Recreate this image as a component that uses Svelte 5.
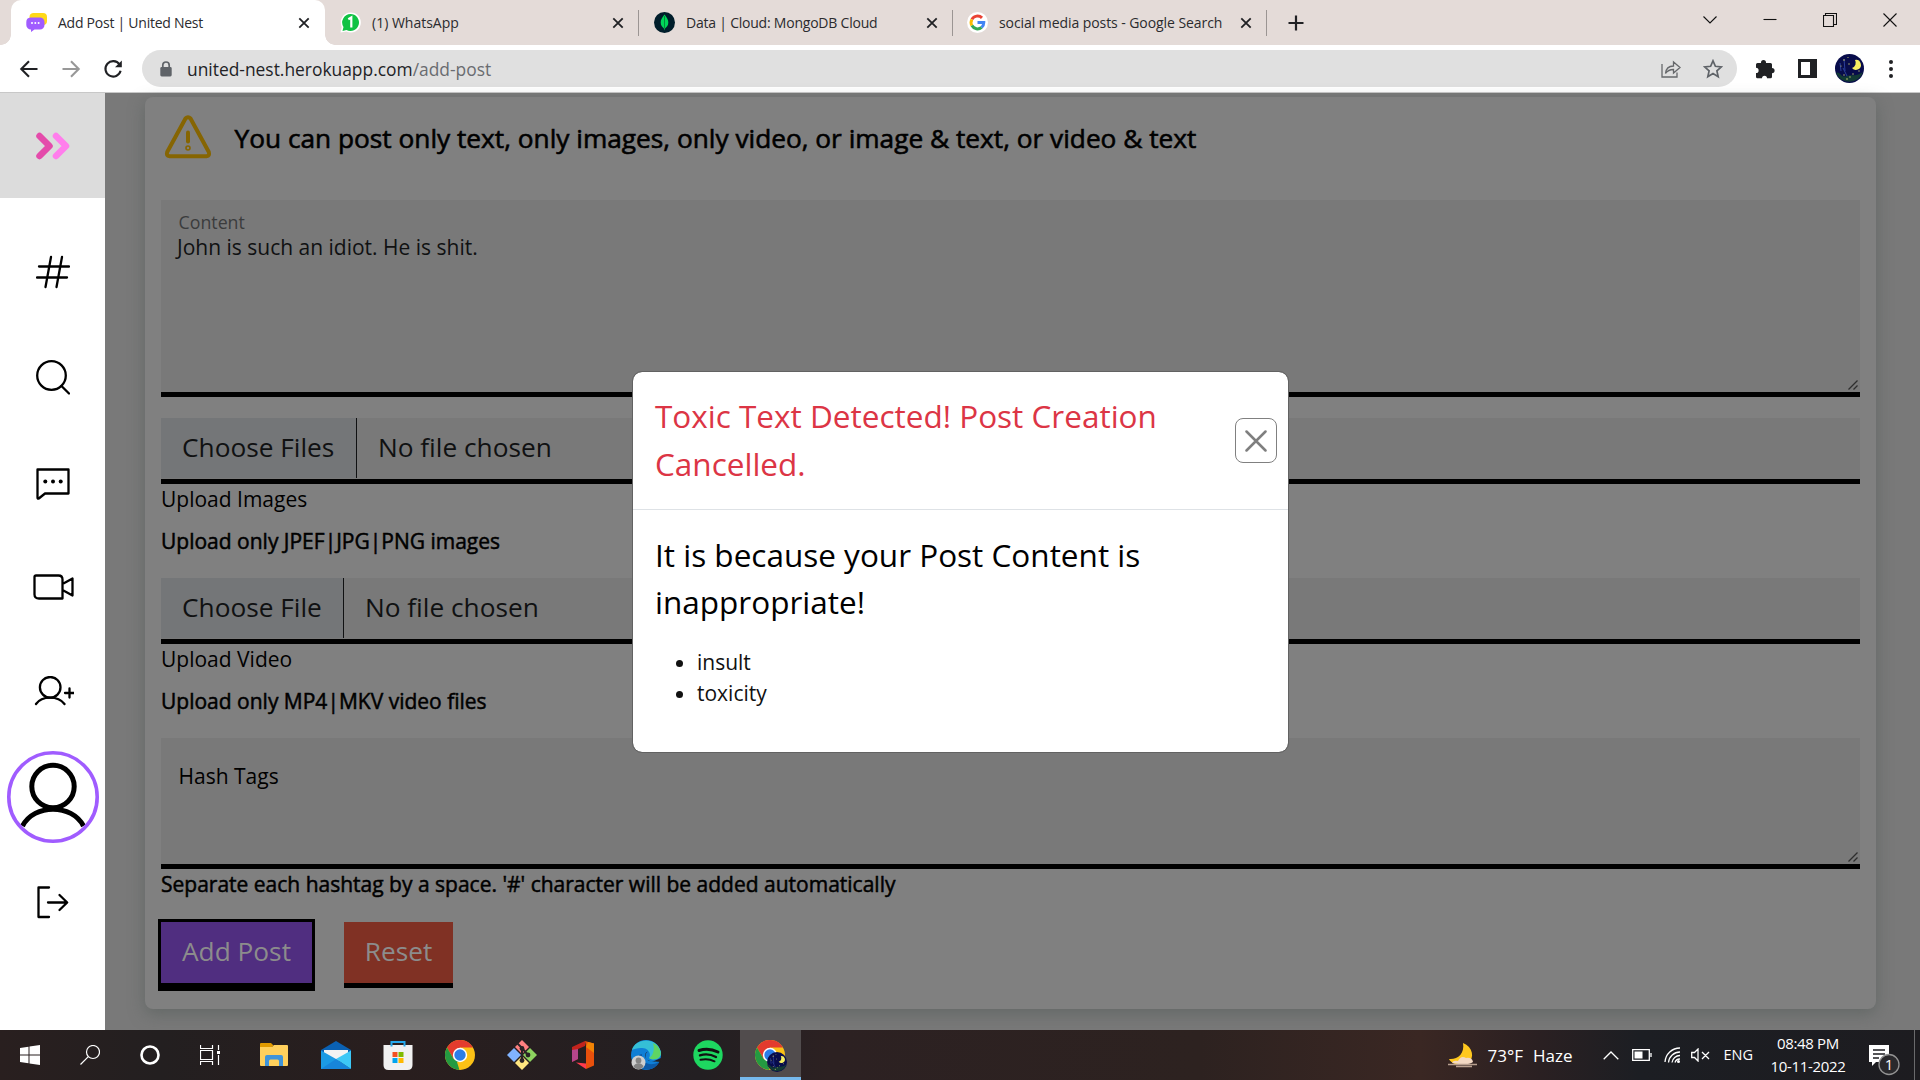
<script>
  const tabs = [
    { title: '(1) WhatsApp', kind: 'wa' },
    { title: 'Data | Cloud: MongoDB Cloud', kind: 'mongo' },
    { title: 'social media posts - Google Search', kind: 'google' }
  ];
</script>

{#snippet chrome()}
  <svg class="ic30" viewBox="0 0 30 30">
    <circle cx="15" cy="15" r="15" fill="#fbc116" />
    <path d="M15 15 8.500 18.800 2 7.500A15 15 0 0 1 28 7.500H15Z" fill="#e33b2e" />
    <path d="M2 7.500 8.500 18.800 15 22 14.500 30A15 15 0 0 1 2 7.500Z" fill="#249a41" />
    <path d="M15 22 21.500 18.500 14.500 30 12 22Z" fill="#fbc116" />
    <circle cx="15" cy="15" r="7.200" fill="#fff" />
    <circle cx="15" cy="15" r="5.700" fill="#2b7de9" />
  </svg>
{/snippet}

{#snippet night()}
  <svg class="night" viewBox="0 0 29 29">
    <circle cx="14.500" cy="14.500" r="14.500" fill="#080c4b" />
    <path d="M1 19C5 16 6 25 12 22C17 20 21 23 28 18A14.500 14.500 0 0 1 1 19Z" fill="#123a35" />
    <path d="M20 6A5 5 0 1 1 17 14A5.500 5.500 0 0 0 20 6Z" fill="#f7ef62" />
    <path d="M5 9l1 8M9 5l1 12M8 14l4 8" stroke="#2b3f9a" stroke-width="1" fill="none" />
    <g fill="#c6c86d"><circle cx="9" cy="6" r=".8" /><circle cx="13" cy="3.500" r=".6" /><circle cx="14" cy="10" r=".7" /><circle cx="6" cy="12" r=".6" /><circle cx="24" cy="17" r=".7" /><circle cx="18" cy="20" r=".7" /><circle cx="12" cy="25" r=".8" /><circle cx="15" cy="23" r=".7" /><circle cx="9" cy="21" r=".7" /></g>
  </svg>
{/snippet}

{#snippet closeX()}
  <svg class="tabx" viewBox="0 0 12 12"><path d="M1.300 1.300 10.700 10.700M10.700 1.300 1.300 10.700" stroke="#202124" stroke-width="1.800" /></svg>
{/snippet}

{#snippet grip()}
  <svg class="grip" viewBox="0 0 10 10"><path d="M.5 9.500 9.500.5M5.500 9.500 9.500 5.500" stroke="#2e2e2e" stroke-width="1.300" /></svg>
{/snippet}

<div class="screen">
  <div class="tabstrip">
    <div class="tab active">
      <svg class="fav" viewBox="0 0 21 19">
        <path d="M7 0h10a4 4 0 0 1 4 4v4a4 4 0 0 1-4 4H7a3.500 3.500 0 0 1-3.500-3.500V4A4 4 0 0 1 7 0Z" fill="#ffd91a" />
        <path d="M4.500 4.500h9.500A4.500 4.500 0 0 1 18.500 9v3a4.500 4.500 0 0 1-4.500 4.500H8.500L5 19v-2.500A4.500 4.500 0 0 1 .3 12V9A4.500 4.500 0 0 1 4.500 4.500Z" fill="#a05cff" />
        <g fill="#fff"><circle cx="6" cy="10" r="1" /><circle cx="9.300" cy="10" r="1" /><circle cx="12.600" cy="10" r="1" /></g>
      </svg>
      <span class="t tt t1">Add Post | United Nest</span>
      {@render closeX()}
    </div>
    {#each tabs as tab}
      <div class="tab {tab.kind}">
        {#if tab.kind === 'wa'}
          <svg class="fav" viewBox="0 0 21 21"><path d="M10.500.5a10 10 0 1 1-4 19L.5 20.500 1.800 15A10 10 0 0 1 10.500.5Z" fill="#fff" /><path d="M10.500 2a8.500 8.500 0 1 1-4 16L2.500 19l1-4A8.500 8.500 0 0 1 10.500 2Z" fill="#0fc243" /><path d="M8.300 7.300 11.300 5.500V15.500" stroke="#fff" stroke-width="2.200" fill="none" /></svg>
        {:else if tab.kind === 'mongo'}
          <svg class="fav" viewBox="0 0 21 21"><circle cx="10.500" cy="10.500" r="10.500" fill="#001e2b" /><path d="M10.500 2.500C8 5.500 6.700 8 6.700 10.500c0 2.700 1.500 4.600 3.300 6l.5 2 .5-2c1.800-1.400 3.300-3.300 3.300-6 0-2.500-1.300-5-3.800-8Z" fill="#00d759" /><path d="M10.500 4v12.500" stroke="#00843a" stroke-width=".9" /></svg>
        {:else}
          <svg class="fav" viewBox="0 0 21 21"><circle cx="10.500" cy="10.500" r="10.500" fill="#fff" /><g fill="none" stroke-width="3"><path d="M15 5.900A6.400 6.400 0 0 0 4.900 7.400" stroke="#ea4335" /><path d="M4.900 7.400A6.400 6.400 0 0 0 4.900 13.600" stroke="#fbbc05" /><path d="M4.900 13.600A6.400 6.400 0 0 0 14.600 15.400" stroke="#34a853" /><path d="M14.600 15.400A6.400 6.400 0 0 0 16.800 10.600H10.500" stroke="#4285f4" /></g></svg>
        {/if}
        <span class="t tt">{tab.title}</span>
        {@render closeX()}
      </div>
    {/each}
    <svg class="plus" viewBox="0 0 16 16"><path d="M8 .5V15.500M.5 8H15.500" stroke="#202124" stroke-width="2.200" /></svg>
    <div class="win">
      <svg viewBox="0 0 14 14"><path d="M.5 3.500 7 10 13.500 3.500" /></svg>
      <svg viewBox="0 0 14 14"><path d="M.5 6.500H13.500" /></svg>
      <svg viewBox="0 0 14 14"><path d="M.5 2.500H10.500V13.500H.5ZM2.500 2.500V.5H13.500V11.500H10.500" /></svg>
      <svg viewBox="0 0 14 14"><path d="M.5.5 13.500 13.500M13.500.5.5 13.500" /></svg>
    </div>
  </div>

  <div class="toolbar">
    <div class="nav">
      <svg viewBox="0 0 20 20"><path d="M18.500 10H2.500M10 2.300 2.300 10 10 17.700" stroke="#202124" /></svg>
      <svg viewBox="0 0 20 20"><path d="M1.500 10H17.500M10 2.300 17.700 10 10 17.700" stroke="#989898" /></svg>
      <svg viewBox="0 0 20 20"><path d="M16.500 5.500A7.700 7.700 0 1 0 17.600 11.800" stroke="#202124" /><path d="M18.800 1.500V8.300H12Z" fill="#202124" /></svg>
    </div>
    <div class="omni">
      <svg class="lock" viewBox="0 0 12 16"><path d="M2.800 7V4.200a3.200 3.200 0 0 1 6.400 0V7" fill="none" stroke="#5f6368" stroke-width="1.700" /><rect x=".3" y="6" width="11.400" height="9.500" rx="1.400" fill="#5f6368" /></svg>
      <span class="url"><span class="t">united-nest.herokuapp.com</span><span class="t path">/add-post</span></span>
      <svg class="share" viewBox="0 0 20 18"><path d="M1 4V17H16V12.500M4.500 13.500C5 8.500 8 6 12.500 6V2L19 7.500 12.500 13V9.500C9 9.500 6.500 10.500 4.500 13.500Z" /></svg>
      <svg class="star" viewBox="0 0 20 20"><path d="M10 1.800 12.400 7.300 18.400 7.900 13.900 11.900 15.200 17.700 10 14.600 4.800 17.700 6.100 11.900 1.600 7.900 7.600 7.300Z" /></svg>
    </div>
    <svg class="puz" viewBox="0 0 20 20"><path d="M6 3.500a2.500 2.500 0 0 1 5 0V4h4.500A1.500 1.500 0 0 1 17 5.500V9a2.600 2.600 0 0 1 0 5.200v3.500a1.500 1.500 0 0 1-1.500 1.500H12a2.500 2.500 0 0 0-5 0H2.500A1.500 1.500 0 0 1 1 17.700V14a2.600 2.600 0 0 0 0-5.200V5.500A1.500 1.500 0 0 1 2.500 4H6Z" fill="#202124" /></svg>
    <svg class="panel" viewBox="0 0 19 19"><path d="M0 0H19V19H0ZM3 3V16H12V3Z" fill="#202124" fill-rule="evenodd" /></svg>
    {@render night()}
    <svg class="dots" viewBox="0 0 4 18"><circle cx="2" cy="2" r="2" /><circle cx="2" cy="9" r="2" /><circle cx="2" cy="16" r="2" /></svg>
  </div>

  <div class="page">
    <nav class="side">
      <div class="brand">
        <svg width="34" height="28" viewBox="0 0 34 28"><path d="M3.500 4 13.500 14 3.500 24" stroke="#e44bab" /><path d="M20 4 30 14 20 24" stroke="#ff7eec" /></svg>
      </div>
      <svg class="s1" viewBox="0 0 34 34"><path d="M15 2 9.500 32M26 2 20.500 32M3 11.500H33M1 22.500H31" /></svg>
      <svg class="s2" viewBox="0 0 34 36"><circle cx="15.500" cy="15.500" r="14.300" /><path d="M25.500 26 33 33.500" /></svg>
      <svg class="s3" viewBox="0 0 34 34"><path d="M1.500 1.500H32.500V25.500H9L2.800 30.500Q1.500 31 1.500 29.500Z" /><g fill="#000" stroke="none"><circle cx="9.300" cy="13.500" r="2" /><circle cx="17" cy="13.500" r="2" /><circle cx="24.700" cy="13.500" r="2" /></g></svg>
      <svg class="s4" viewBox="0 0 41 27"><path d="M3 1.500H25.500Q29.500 1.500 29.500 5.500V24.500H6Q1.500 24.500 1.500 20.500V3Q1.500 1.500 3 1.500ZM29.500 10 39.500 4.500V21.500L29.500 16Z" /></svg>
      <svg class="s5" viewBox="0 0 41 30"><circle cx="17.200" cy="11.300" r="10.300" /><path d="M3 28C9 19.500 25 19.500 31.500 28M36.500 12.500V21.500M32 17H41" /></svg>
      <svg class="s6" viewBox="0 0 92 92"><path class="bold" d="M15.500 75C27 52.500 65 52.500 76.500 75" /><circle class="bold" cx="46" cy="35.500" r="21.200" /><circle class="ring" cx="46" cy="46" r="44.200" /></svg>
      <svg class="s7" viewBox="0 0 32 34"><path d="M12 1.500H1.500V31H12M11 16.500H30M22.500 9 30.200 16.500 22.500 24" /></svg>
    </nav>

    <main>
      <section class="card">
        <div class="notice">
          <svg viewBox="0 0 48 44"><path d="M21.500 3.500Q24 1 26.500 3.500L44.800 37Q46 41 42.500 41.200H5.500Q2 41 3.200 37Z" /><path class="mark" d="M24 17.500V26.500" /><circle cx="24" cy="33" r=".8" /></svg>
          <h4 class="t head">You can post only text, only images, only video, or image &amp; text, or video &amp; text</h4>
        </div>
        <div class="area big">
          <span class="t lbl">Content</span>
          <span class="t txt">John is such an idiot. He is shit.</span>
          {@render grip()}
        </div>
        <div class="file"><span class="pick"><span class="t">Choose Files</span></span><span class="t">No file chosen</span></div>
        <div class="t cap">Upload Images</div>
        <div class="t hint">Upload only JPEF|JPG|PNG images</div>
        <div class="file second"><span class="pick"><span class="t">Choose File</span></span><span class="t">No file chosen</span></div>
        <div class="t cap">Upload Video</div>
        <div class="t hint">Upload only MP4|MKV video files</div>
        <div class="area small">
          <span class="t tags">Hash Tags</span>
          {@render grip()}
        </div>
        <div class="t hint sep">Separate each hashtag by a space. '#' character will be added automatically</div>
        <div class="btns">
          <button class="add"><span class="t">Add Post</span></button>
          <button class="reset"><span class="t">Reset</span></button>
        </div>
      </section>
    </main>
  </div>

  <footer class="taskbar">
    <svg class="k1" viewBox="0 0 20 20"><path fill="#fff" d="M0 3 8.500 1.700V9.500H0ZM9.500 1.500 20 0V9.500H9.500ZM0 10.500H8.500V18.300L0 17ZM9.500 10.500H20V20L9.500 18.500Z" /></svg>
    <svg class="k2" viewBox="0 0 20 20"><circle cx="13" cy="7" r="6.500" /><path d="M8.300 11.700.5 19.500" /></svg>
    <svg class="k3" viewBox="0 0 20 20"><circle cx="10" cy="10" r="8.500" /></svg>
    <svg class="k4" viewBox="0 0 20 20"><path d="M.5 0V3.500H12.500V0M.5 5.500H12.500V14.500H.5ZM.5 20V16.500H12.500V20M18.500 0V5M18.500 10V20" /><rect x="17" y="6" width="3" height="3" fill="#fff" stroke="none" /></svg>
    <svg class="k5" viewBox="0 0 28 24"><path d="M0 1Q0 0 1 0H11L13.500 2.500 11 5H0Z" fill="#e09a00" /><path d="M0 4H12L14 2H27Q28 2 28 3V22Q28 23 27 23H1Q0 23 0 22Z" fill="#ffd05c" /><path d="M5 23V14Q5 12 7 12H21Q23 12 23 14V23H19V18Q19 16.500 17.500 16.500H10.500Q9 16.500 9 18V23Z" fill="#3f94d9" /></svg>
    <svg class="k6" viewBox="0 0 30 28"><path d="M15 0 30 9V14H0V9Z" fill="#0a61b3" /><path d="M3 9H27V18L15 20 3 18Z" fill="#f3f3f3" /><path d="M0 9.500 15 18 30 28H0Z" fill="#1b9ae4" /><path d="M30 9.500V28L15 18Z" fill="#3dc8f6" /><path d="M0 28 15 18 30 28Z" fill="#1785da" /></svg>
    <svg class="k7" viewBox="0 0 30 30"><path d="M.5 5H29.500V25Q29.500 30 24.500 30H5.500Q.5 30 .5 25Z" fill="#f1f1f1" /><path d="M8.500 6.500V2H21.500V6.500" fill="none" stroke="#24a8ec" stroke-width="2" /><path d="M9.500 12H14.500V17H9.500Z" fill="#f25022" /><path d="M15.500 12H20.500V17H15.500Z" fill="#7fba00" /><path d="M9.500 18H14.500V23H9.500Z" fill="#00a4ef" /><path d="M15.500 18H20.500V23H15.500Z" fill="#ffb900" /></svg>
    <span class="k8">{@render chrome()}</span>
    <svg class="k9" viewBox="0 0 30 30"><path d="M15 0 22 7 15 14 8 7Z" fill="#ff8080" /><path d="M7 8 14 15 7 22 0 15Z" fill="#80b3ff" /><path d="M23 8 30 15 23 22 16 15Z" fill="#8dd35f" /><path d="M15 16 22 23 15 30 8 23Z" fill="#ffe680" /><path d="M10 3 15 8V20M15 8 20.500 14.500" stroke="#2a2325" stroke-width="2" fill="none" /><g fill="#2a2325"><circle cx="15" cy="8.500" r="2.400" /><circle cx="15" cy="20.500" r="2.400" /><circle cx="21" cy="15" r="2.400" /></g></svg>
    <svg class="k10" viewBox="0 0 22 28"><path d="M0 6 13 0V5L6 8V18L0 21Z" fill="#c2231c" /><path d="M13 0 22 2.500V24.500L14 28V5Z" fill="#e8500c" /><path d="M16 1 22 2.500V12L14 6Z" fill="#f08305" /><path d="M4 21.500 14 22.500V28Z" fill="#ff3a4c" /><path d="M0 9 6 8V18L0 21Z" fill="#b5468a" /></svg>
    <svg class="k11" viewBox="0 0 30 30"><circle cx="15" cy="15" r="15" fill="#0f7fd6" /><path d="M1 10C4-2 26-4 30 12C31 20 22 21 18 18C21 13 16 7 10 8C6 8 3 9 1 10Z" fill="#35bfd6" /><path d="M22 3C28 6 31 12 29 16C27 20 21 20 18 18C22 16 24 9 22 3Z" fill="#5fd562" /><path d="M11 14C10 23 19 27 28 22C23 32 9 32 5 22C6 17 8 14 11 14Z" fill="#0c5aa8" /><path d="M17 11.500C12 13 13 21 22 21.500L30 18V22L18 21C14 19 13 14 17 11.500Z" fill="#231f20" /><circle cx="7.500" cy="22.500" r="7" fill="#cfcfcf" /><circle cx="7.500" cy="20.500" r="2.900" fill="#838383" /><path d="M2.500 27A5.200 5.200 0 0 1 12.500 27Q7.500 31.500 2.500 27Z" fill="#838383" /></svg>
    <svg class="k12" viewBox="0 0 30 30"><circle class="disc" cx="15" cy="15" r="14.700" fill="#1ed760" /><path d="M6 10.500C12 8.500 19 9 25 12" stroke-width="2.900" /><path d="M7 15.300C12 13.800 18 14.300 23 17" stroke-width="2.400" /><path d="M7.500 19.800C12 18.700 17 19 21.500 21.300" stroke-width="2" /></svg>
    <div class="running">{@render chrome()}{@render night()}</div>
    <div class="tray">
      <svg class="moon" viewBox="0 0 30 25"><path d="M15 0C25 4 27 15 20 20C13 24 3 21 1 16C9 17 17 11 15 0Z" fill="#ffc81f" /><path d="M4 20Q5 17 10 18Q13 12 18 15Q24 14 25 19Q20 23 4 20Z" fill="#f3d9c4" /><path d="M0 21.500H29M8 23.500H24" stroke="#b9a08f" stroke-width="1.500" /></svg>
      <span class="t temp">73°F</span>
      <span class="t haze">Haze</span>
      <svg class="caret" viewBox="0 0 16 10"><path d="M.7 9.300 8 2 15.300 9.300" /></svg>
      <svg class="batt" viewBox="0 0 20 12"><path d="M.7.700H17.300V11.300H.7ZM19 4V8" /><rect x="2.500" y="2.500" width="8" height="7" fill="#fff" stroke="none" /></svg>
      <svg class="wifi" viewBox="0 0 17 17"><path d="M1 15A15 15 0 0 1 16 1M4.500 15.500A11.500 11.500 0 0 1 16 5M8 15.500A8 8 0 0 1 16 8.500M11 15.500A5 5 0 0 1 16 12" /><circle cx="14.500" cy="14.500" r="1.500" fill="#fff" stroke="none" /></svg>
      <svg class="spk" viewBox="0 0 19 14"><path d="M.7 4.500H3.500L7 1V13L3.500 9.500H.7ZM11 4 18 11M18 4 11 11" /></svg>
      <span class="t eng">ENG</span>
      <div class="clock"><span class="t">08:48 PM</span><span class="t date">10-11-2022</span></div>
      <svg class="note" viewBox="0 0 32 32"><path d="M0 0H20V17H7L3 21V17H0Z" fill="#fff" /><path d="M4 5H16M4 9H16M4 13H10" stroke="#1d1c20" stroke-width="1.300" /><circle cx="20" cy="19.500" r="10" fill="#2a292c" stroke="#929292" /><text x="20" y="25" text-anchor="middle">1</text></svg>
      <span class="edge"></span>
    </div>
  </footer>

  <div class="modal">
    <header>
      <h3><span class="t">Toxic Text Detected! Post Creation</span> <span class="t">Cancelled.</span></h3>
      <button aria-label="Close"><svg viewBox="0 0 22 22"><path d="M1.500 1.500 20.500 20.500M20.500 1.500 1.500 20.500" /></svg></button>
    </header>
    <div class="body">
      <h3><span class="t m2">It is because your Post Content is</span> <span class="t m2">inappropriate!</span></h3>
      <ul><li><span class="t">insult</span></li><li><span class="t">toxicity</span></li></ul>
    </div>
  </div>
</div>

<style>
  :global(body) { margin: 0; overflow: hidden; }
  .screen { position: relative; width: 1920px; height: 1080px; display: grid; grid-template-rows: 45px 48px 937px 50px; font-family: 'Open Sans', 'Noto Sans', sans-serif; overflow: hidden; background: #fff; }
  svg { display: block; flex: none; fill: none; }
  h3, h4, ul { margin: 0; font-weight: 400; }
  button { font: inherit; border: 0; padding: 0; margin: 0; }
  .t { white-space: pre; }

  .tabstrip { display: flex; align-items: center; background: #e4dbd8; padding-left: 11px; }
  .tab { height: 45px; box-sizing: border-box; display: flex; align-items: center; position: relative; padding: 0 15px; width: 314px; }
  .tab.active { background: #fff; border-radius: 10px 10px 0 0; }
  .tab.active::before, .tab.active::after { content: ''; position: absolute; bottom: 0; width: 10px; height: 10px; }
  .tab.active::before { left: -10px; background: radial-gradient(circle at 0 0, transparent 9.500px, #fff 10px); }
  .tab.active::after { right: -10px; background: radial-gradient(circle at 100% 0, transparent 9.500px, #fff 10px); }
  .tab:not(.active)::after { content: ''; position: absolute; right: 0; top: 10px; width: 1px; height: 26px; background: #9b9593; }
  .tab.google { padding-left: 14px; }
  .fav { width: 21px; height: 21px; }
  .active .fav { height: 19px; }
  .tt { font-size: 14px; line-height: 20px; color: #2b2b2e; margin-left: 11px; }
  .t1 { letter-spacing: -.25px; }
  .mongo .tt { letter-spacing: -.22px; }
  .google .tt { letter-spacing: -.07px; }
  .tabx { width: 12px; height: 12px; margin-left: auto; }
  .plus { width: 16px; height: 16px; margin-left: 21px; }
  .win { margin-left: auto; display: flex; gap: 46px; padding-right: 23px; align-self: flex-start; padding-top: 13px; }
  .win svg { width: 14px; height: 14px; stroke: #111; stroke-width: 1.100; }

  .toolbar { display: flex; align-items: center; box-sizing: border-box; border-bottom: 1px solid #c8c8c8; background: #fff; padding-left: 19px; }
  .nav { display: flex; gap: 22px; width: 123px; }
  .nav svg { width: 20px; height: 20px; stroke-width: 2.100; }
  .omni { width: 1595px; height: 37px; box-sizing: border-box; border-radius: 19px; background: #e0e0e0; display: flex; align-items: center; padding: 0 14px 0 18px; }
  .lock { width: 12px; height: 16px; }
  .url { margin-left: 15px; font-size: 17.400px; line-height: 24px; color: #222326; flex: 1; }
  .path { color: #6a6c70; }
  .share { width: 20px; height: 18px; stroke: #66686b; stroke-width: 1.300; margin-right: 22px; }
  .star { width: 20px; height: 20px; stroke: #5f6368; stroke-width: 1.700; }
  .puz { width: 20px; height: 20px; margin-left: 18px; }
  .panel { width: 19px; height: 19px; margin-left: 23px; }
  .night { width: 29px; height: 29px; margin-left: 18px; }
  .dots { width: 4px; height: 18px; margin-left: 25px; fill: #202124; }

  .page { display: flex; background: #797979; }
  .side { width: 105px; background: #fff; display: flex; flex-direction: column; align-items: center; }
  .side > svg { stroke: #000; stroke-width: 2.300; stroke-linecap: round; stroke-linejoin: round; }
  .brand { width: 105px; height: 105px; background: #dcdcdc; display: flex; align-items: center; justify-content: center; margin-bottom: 57px; }
  .brand svg { stroke-width: 6.500; stroke-linecap: round; stroke-linejoin: round; }
  .s1 { width: 34px; height: 34px; margin-bottom: 71px; }
  .s2 { width: 34px; height: 36px; margin-bottom: 72px; }
  .s3 { width: 34px; height: 34px; margin-bottom: 72px; }
  .s4 { width: 41px; height: 27px; margin: 0 0 75px 1px; }
  .s5 { width: 41px; height: 30px; margin: 0 0 45px 1px; }
  .s6 { width: 92px; height: 92px; margin-bottom: 43px; }
  .s7 { width: 32px; height: 34px; }
  .bold { stroke-width: 5; stroke-linecap: butt; }
  .ring { stroke: #a05cff; stroke-width: 3.600; }

  main { flex: 1; padding: 4px 44px 21px 40px; }
  .card { height: 912px; box-sizing: border-box; background: #808080; border-radius: 8px; padding: 0 16px; box-shadow: 0 5px 16px rgba(78, 88, 84, .5); color: #000; }
  .notice { height: 81px; display: flex; align-items: center; margin-bottom: 22px; padding-left: 3px; }
  .notice svg { width: 48px; height: 44px; stroke: #866502; stroke-width: 4; stroke-linecap: round; stroke-linejoin: round; margin-bottom: 1px; }
  .head { font-size: 26.250px; line-height: 40px; margin-left: 22.500px; -webkit-text-stroke: .6px #000; padding-top: 1px; }
  .area { position: relative; box-sizing: border-box; background: #797979; border-bottom: 5px solid #000; display: flex; flex-direction: column; }
  .big { height: 197px; padding: 12px 16px 0; margin-bottom: 21px; }
  .lbl { font-size: 17.800px; line-height: 21px; color: #3b3c3d; padding-left: 1.500px; }
  .txt { font-size: 21px; line-height: 28px; color: #101112; }
  .grip { position: absolute; right: 2px; bottom: 2px; width: 10px; height: 10px; }
  .file { height: 66px; box-sizing: border-box; border-bottom: 5px solid #000; background: #797979; display: flex; font-size: 26.250px; line-height: 59px; color: #101112; }
  .pick { box-sizing: border-box; height: 60px; width: 196px; padding-left: 21px; margin-right: 21px; background: #747678; border-right: 1px solid #101112; }
  .second .pick { width: 183px; }
  .cap { font-size: 21px; line-height: 30px; margin-bottom: 12px; }
  .hint { font-size: 21px; line-height: 30px; margin-bottom: 22px; -webkit-text-stroke: .5px #000; }
  .small { height: 131px; padding: 23px 17.500px 0; }
  .tags { font-size: 21px; line-height: 30px; }
  .hint.sep { margin-bottom: 23px; }
  .btns { display: flex; gap: 32px; font-size: 26.250px; }
  .btns button { height: 66px; box-sizing: border-box; border-bottom: 5px solid #000; color: #8c8c8c; display: flex; justify-content: center; line-height: 58px; }
  .add { width: 151px; background: #502e80; box-shadow: 0 0 0 3px #000; }
  .reset { width: 109px; background: #803124; }

  .taskbar { display: flex; align-items: center; background: linear-gradient(90deg, #291f1f 0, #231f20 160px, #291e1e 400px, #231f22 700px, #2c2122 830px, #2d2220 1200px, #3a2723 1420px, #2a2022 1540px, #1c1e23 1640px, #1d1c20 1920px); padding-left: 20px; position: relative; }
  .k1, .k2, .k3, .k4 { width: 20px; height: 20px; margin-right: 40px; stroke-width: 1.200; }
  .k2, .k4 { stroke: #fff; }
  .k3 { stroke: #fff; stroke-width: 2.600; }
  .k5 { width: 28px; height: 24px; margin-right: 33px; }
  .k6 { width: 30px; height: 28px; margin-right: 32px; }
  .k7 { width: 30px; height: 30px; margin-right: 32px; }
  .ic30, .k9, .k11, .k12 { width: 30px; height: 30px; }
  .k8 { margin-right: 32px; }
  .k9 { margin-right: 35px; }
  .k10 { width: 22px; height: 28px; margin-right: 37px; }
  .k11 { margin-right: 32px; }
  .k12 { margin-right: 17px; stroke: #111; stroke-linecap: round; }
  .disc { stroke: none; }
  .running { position: relative; width: 61px; height: 50px; box-sizing: border-box; background: #514c4d; border-bottom: 3px solid #76b9ed; padding: 10px 0 0 15px; }
  .running .night { position: absolute; left: 27px; top: 22px; width: 20px; height: 20px; margin: 0; }
  .tray { margin-left: auto; display: flex; align-items: center; height: 50px; color: #fff; font-size: 17px; line-height: 22px; }
  .tray svg { stroke: #fff; stroke-width: 1.300; }
  .tray .moon { width: 30px; height: 25px; stroke: none; margin-right: 9px; }
  .haze { margin-left: 10px; }
  .temp, .haze { padding-top: 1px; }
  .caret { width: 16px; height: 10px; margin-left: 31px; }
  .batt { width: 20px; height: 12px; margin-left: 13px; }
  .wifi { width: 17px; height: 17px; margin-left: 12px; }
  .spk { width: 19px; height: 14px; margin-left: 10px; }
  .eng { font-size: 14.500px; margin-left: 13px; }
  .clock { width: 76px; margin-left: 17px; display: flex; flex-direction: column; align-items: center; font-size: 15px; line-height: 23px; letter-spacing: -.35px; }
  .tray .note { width: 32px; height: 32px; margin: 11px 0 0 23px; stroke: none; }
  .note text { font: 15px 'Open Sans', sans-serif; fill: #fff; }
  .edge { width: 1px; height: 50px; background: #6a6a6c; margin: 0 5px 0 13px; }

  .modal { position: absolute; left: 632px; top: 371px; width: 657px; height: 382px; box-sizing: border-box; background: #fff; border: 1px solid #626262; background-clip: padding-box; border-radius: 10px; }
  .modal header { height: 138px; box-sizing: border-box; border-bottom: 1px solid #dee2e6; padding: 20px 11px 0 22px; display: flex; justify-content: space-between; color: #dc3545; }
  .modal h3 { display: flex; flex-direction: column; font-size: 31.500px; line-height: 47.250px; }
  .modal header h3 { line-height: 48px; }
  .m2 { color: #000; }
  .modal button { width: 42px; height: 45px; margin-top: 26px; box-sizing: border-box; border: 1px solid #808080; border-radius: 8px; background: #fff; display: flex; align-items: center; justify-content: center; }
  .modal button svg { width: 22px; height: 22px; stroke: #7f7f7f; stroke-width: 2.500; stroke-linecap: round; }
  .body { padding: 21px 22px 0; }
  ul { padding-left: 42px; margin-top: 21px; font-size: 21px; line-height: 31px; color: #111; }
</style>
